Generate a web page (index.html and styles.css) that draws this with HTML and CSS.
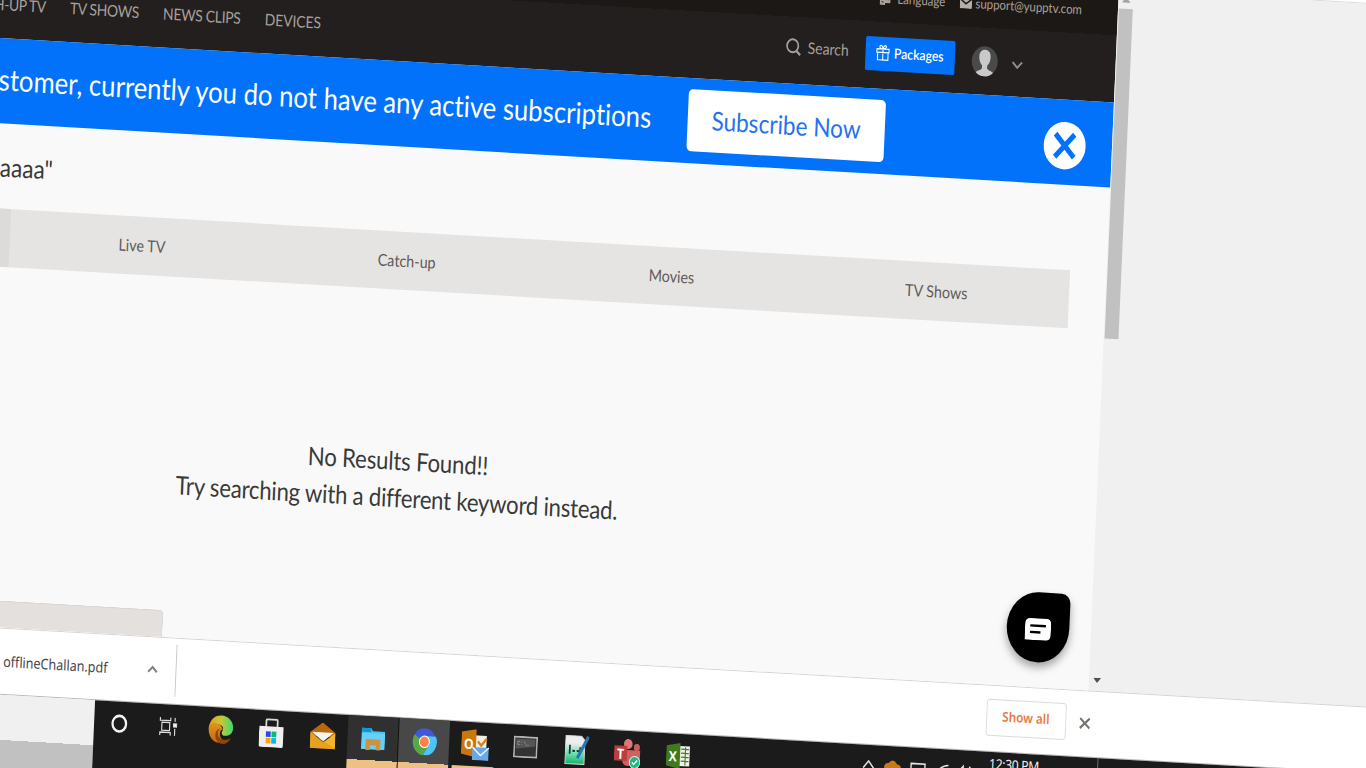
FILE: index.html
```html
<!DOCTYPE html>
<html lang="en">
<head>
<meta charset="utf-8">
<title>YuppTV search</title>
<link rel="stylesheet" href="styles.css">
</head>
<body>
<div class="stage">
  <div class="window-edge"></div>
  <div class="window">
    <main class="page">
      <header class="header">
      <div class="topbar">
        <svg class="lang-icon" width="14" height="14" viewBox="0 0 14 14"><path d="M1 1h8v3h4v8H7v2H1z" fill="#aaa19a"/><path d="M3 7h3M3 11h2M9 7h2v2" stroke="#1c1815" fill="none"/></svg>
        <span class="language">Language</span>
        <svg class="mail-icon" width="14" height="12" viewBox="0 0 14 12"><path d="M1 1h12v1L7 6 1 2zM0 3l7 5 7-5v8q0 1-1 1H1q-1 0-1-1z" fill="#b5ada7"/></svg>
        <span class="support">support@yupptv.com</span>
      </div>
      <nav class="nav">
        <span class="nav-item catch">CATCH-UP TV</span>
        <span class="nav-item shows">TV SHOWS</span>
        <span class="nav-item news">NEWS CLIPS</span>
        <span class="nav-item devices">DEVICES</span>
        <svg class="search-icon" width="18" height="18" viewBox="0 0 18 18" fill="none" stroke="#a8a09b" stroke-width="1.900"><circle cx="8" cy="8" r="6.500"/><path d="M12.500 13l4.500 4" stroke-width="2.400"/></svg>
        <span class="search">Search</span>
        <span class="packages"><svg width="16" height="17" viewBox="0 0 16 17" fill="none" stroke="#fff" stroke-width="1.200"><path d="M1 5h14v3.500H1zM2 8.500h12V16H2zM8 5v11M8 5C5 5 3.500 3.500 4.500 2S7.500 2 8 5c.5-3 2.500-4 3.500-3S11 5 8 5z"/></svg><b>Packages</b></span>
        <svg class="avatar" width="31" height="31" viewBox="0 0 31 31"><defs><clipPath id="av"><circle cx="15.500" cy="15.500" r="15"/></clipPath></defs><g clip-path="url(#av)"><path fill="#4a4a4a" d="M0 0h31v31H0z"/><path fill="#c9c9c9" d="M15.500 4c4 0 6.500 2.500 6.500 7 0 4-1.500 7-3.500 8.500v3c1 2 6 2.500 8 5V31h-22v-3.500c2-2.500 7-3 8-5v-3C10.500 18 9 15 9 11c0-4.500 2.500-7 6.500-7z"/></g></svg>
        <svg class="down" width="14" height="9" viewBox="0 0 14 9"><path d="M1.500 1.500L7 7l5.500-5.500" fill="none" stroke="#948c88" stroke-width="2"/></svg>
      </nav>
      </header>
      <section class="banner">
        <span class="message">Dear Customer, currently you do not have any active subscriptions</span>
        <span class="subscribe">Subscribe Now</span>
        <svg class="dismiss" width="49" height="48" viewBox="0 0 49 48"><ellipse cx="24.500" cy="24" rx="24.200" ry="23.700" fill="#fff"/><path d="M13.500 12.500l22 23M35.500 12.500l-22 23" stroke="#0272fb" stroke-width="5.500"/></svg>
      </section>
      <h1 class="query">Search results for "aaaaaaaa"</h1>
      <div class="tabs">
        <span class="tab active">All</span><span class="tab">Live TV</span><span class="tab">Catch-up</span><span class="tab">Movies</span><span class="tab">TV Shows</span>
      </div>
      <div class="empty"><p class="first">No Results Found!!</p><p class="second">Try searching with a different keyword instead.</p></div>
      <div class="status"></div>
      <div class="chat"><svg width="30" height="22" viewBox="0 0 30 22"><path d="M6 0h18q6 0 6 6v10q0 6-6 6H0V6q0-6 6-6z" fill="#fff"/><path d="M6 7.500h18M6 14h12" stroke="#000" stroke-width="2.400"/></svg></div>
    </main>
    <div class="scrollbar">
      <svg class="arrow up" width="10" height="6" viewBox="0 0 10 6"><path d="M0 6l5-6 5 6z" fill="#a3a3a3"/></svg>
      <div class="thumb"></div>
      <svg class="arrow" width="9" height="5" viewBox="0 0 9 5"><path d="M0 0h9L4.500 5z" fill="#505050"/></svg>
    </div>
  </div>
  <div class="shelf">
    <span class="file">offlineChallan.pdf</span>
    <svg class="file-menu" width="13" height="9" viewBox="0 0 13 9"><path d="M1.500 7.500l5-5 5 5" fill="none" stroke="#808080" stroke-width="2.200"/></svg>
    <span class="divider"></span>
    <span class="show-all">Show all</span>
    <svg class="shelf-close" width="13" height="12" viewBox="0 0 13 12"><path d="M1 1l11 10M12 1L1 11" stroke="#75756f" stroke-width="2.300"/></svg>
  </div>
  <div class="bottom">
    <div class="outside"></div>
    <div class="taskbar">
      <div class="app"><svg width="20" height="20" viewBox="0 0 20 20"><circle cx="10" cy="10" r="7.800" fill="none" stroke="#f2f2f2" stroke-width="2.600"/></svg></div>
      <div class="app task-view"><svg width="22" height="20" viewBox="0 0 22 20" fill="none" stroke="#ddd" stroke-width="1.300"><path d="M2 1v3h12V1M4 6h9v8H4zM2 19v-3h12v3M19 1v4M19 12v7"/><path d="M17.500 7h3.500v3h-3.500z" fill="#fff"/></svg></div>
      <div class="app"><svg width="30" height="30" viewBox="0 0 30 30"><defs><linearGradient id="e1"><stop stop-color="#dfa11b"/><stop offset=".5" stop-color="#c9c638"/><stop offset="1" stop-color="#39dc70"/></linearGradient><linearGradient id="e2" x2="0" y2="1"><stop stop-color="#df9420"/><stop offset="1" stop-color="#c66b08"/></linearGradient></defs><path d="M1 13C3 4 9 1 15 1c8 0 14 5 14 12 0 6-5 8-9 8-3 0-5-2-3-5 2-3-1-6-5-6-5 0-9 1-11 3z" fill="url(#e1)"/><path d="M1 13c2-5 8-5 12-3 2 1 4 3 4 5-4 0-5 9 3 11-9 6-20-1-19-13z" fill="url(#e2)"/><path d="M15 14c-6 3-3 11 4 11 4 0 6-1 8-2-3 5-7 7-12 6-8-3-8-14 0-15z" fill="#8f450c"/></svg></div>
      <div class="app"><svg width="29" height="29" viewBox="0 0 29 29"><path d="M8 9V2.500Q8 1 9.500 1h10Q21 1 21 2.500V9" fill="none" stroke="#d9d9d9" stroke-width="2"/><path d="M0 8h28v19q0 2-2 2H2q-2 0-2-2z" fill="#efefef"/><path d="M8 13h5.500v5.500H8z" fill="#264de4"/><path d="M14.500 13H20v5.500h-5.500z" fill="#08b984"/><path d="M8 19.500h5.500V25H8z" fill="#f9a709"/><path d="M14.500 19.500H20V25h-5.500z" fill="#06b8f5"/></svg></div>
      <div class="app"><svg width="29" height="27" viewBox="0 0 29 27"><path d="M0 10L14 0l15 10v4H0z" fill="#b9690b"/><path d="M2 10h25L15 19z" fill="#f4f4f4"/><path d="M0 10l15 10L29 10v16H0z" fill="#f2b42c"/><path d="M0 11v15h29L15 18z" fill="#dc9418" opacity=".6"/></svg></div>
      <div class="app running idle"><svg width="27" height="23" viewBox="0 0 27 23"><path d="M0 1h11l2 3h14v18H0z" fill="#43c7f7"/><path d="M0 1h11v4H0z" fill="#1595d5"/><path d="M0 6h27v16H0z" fill="#67d0f4"/><path d="M5 23V12h17v11h-5v-5h-7v5z" fill="#ce9140"/></svg></div>
      <div class="app running current"><svg width="29" height="27" viewBox="0 0 30 28"><circle cx="15" cy="14" r="14" fill="#4059dc"/><path d="M3 7a14 14 0 0 0 11 21l6-10-5-4z" fill="#57a844"/><path d="M15 8h13.500A14 14 0 0 1 14 28l7-12z" fill="#4cc4f8"/><circle cx="15" cy="14" r="6.500" fill="#fff"/><circle cx="15" cy="14" r="5.400" fill="#fa824b"/></svg></div>
      <div class="app running"><svg width="32" height="31" viewBox="0 0 32 31"><path d="M14 6h15v16H14z" fill="#f4eee8"/><path d="M19 12l4 4 6-7" stroke="#d48415" stroke-width="2.500" fill="none"/><path d="M0 3l17-3v28L0 25z" fill="#cc770b"/><text x="3" y="20" class="glyph" fill="#fff">O</text><path d="M13 18h19v13H13z" fill="#68aae9"/><path d="M13 18l9.500 8 9.500-8" fill="none" stroke="#fff" stroke-width="1.300"/></svg></div>
      <div class="app running"><svg width="28" height="22" viewBox="0 0 28 22"><path d="M1 1h26v20H1z" fill="#333" stroke="#b4b4b4" stroke-width="1.800"/><path d="M3 3h22v7L3 13z" fill="#555"/><text x="4" y="9" class="tiny" fill="#aaa">C:\_</text></svg></div>
      <div class="app"><svg width="28" height="30" viewBox="0 0 28 30"><defs><linearGradient id="n1" x2="0" y2="1"><stop offset=".25" stop-color="#eee"/><stop offset=".65" stop-color="#6adcae"/><stop offset="1" stop-color="#13b46b"/></linearGradient></defs><path d="M1 1h18l4 4v24H1z" fill="url(#n1)" stroke="#ddd"/><path d="M6 10v9M9 16h3M14 16h3M18 12v5" stroke="#123b30" stroke-width="2"/><path d="M27 1L15 23" stroke="#2777b5" stroke-width="3.500"/></svg></div>
      <div class="app"><svg width="31" height="29" viewBox="0 0 31 29"><circle cx="16" cy="5" r="5" fill="#dc7775"/><circle cx="26" cy="8" r="3.500" fill="#c7605c"/><path d="M10 11h20v8q-1 7-8 7-10 3-12-3z" fill="#cf6260"/><path d="M0 7h15v15H0z" fill="#ba3e3e"/><text x="3.500" y="20" class="glyph" fill="#fff">T</text><circle cx="24" cy="23" r="6" fill="#20b880" stroke="#d7f3e7"/><path d="M21 23l2 2 4-4" stroke="#fff" stroke-width="1.500" fill="none"/></svg></div>
      <div class="app"><svg width="28" height="26" viewBox="0 0 28 26"><path d="M14 3h13v20H14z" fill="#edf2e8"/><path d="M17 6h9M17 10h9M17 14h9M17 18h9M22 4v18" stroke="#4a7a2a" stroke-width="1.300"/><path d="M0 3l16-3v26L0 23z" fill="#41791f"/><text x="3" y="18.500" class="glyph" fill="#fff">X</text></svg></div>
      <div class="tray">
        <svg width="130" height="22" viewBox="0 0 130 22" fill="none" stroke="#e5e5e5" stroke-width="1.600"><path d="M2 12l6-7 6 7"/><path d="M27 15q-3-9 4-9 5-6 10 1 6 0 4 8z" fill="#c77a17" stroke="none"/><path d="M57 5h16v11H57zM60 19h8"/><path d="M87 16q1-10 13-11M92 16q1-5 8-6"/><path d="M110 9h3l4-4v14l-4-4h-3zM120 8q3 4 0 8M124 5q6 7 0 14"/></svg>
      </div>
      <div class="clock"><span>12:30 PM</span></div>
      <div class="desktop-edge"></div>
    </div>
  </div>
</div>
</body>
</html>
```
FILE: styles.css
```css
* { box-sizing: border-box; }
html { overflow: hidden; }
body { margin: 0; width: 1366px; height: 768px; overflow: hidden; background: #fff; font-family: Lato, "Liberation Sans", sans-serif; font-variant-ligatures: none; }
svg { display: block; flex: none; }
span { white-space: nowrap; flex: none; }
/* The desktop is tilted and narrowed as a single surface. */
.stage { width: 1960px; height: 870px; display: flex; flex-direction: column; transform-origin: 0 0; transform: matrix(0.868, 0.0501, -0.0435, 1, -277.3, -101.2); }
.window-edge { height: 10px; background: #fff; border-bottom: 1px solid #ddd9d9; flex: none; }
.window { height: 701px; display: flex; background: #f0f0f0; flex: none; }
.page { width: 1608.5px; background: #f9f9f9; position: relative; display: flex; flex-direction: column; overflow: hidden; flex: none; }
.header { height: 113px; flex: none; background: linear-gradient(#1c1815 46px, #231f1e 46px); }
.topbar { height: 46px; display: flex; align-items: center; color: #aaa19a; font-size: 13.2px; padding: 0 0 3px 1334px; }
.support { letter-spacing: -0.05px; }
.language { width: 72px; margin-left: 7px; }
.mail-icon { margin-right: 4px; }
.nav { height: 67px; color: #a8a09b; display: flex; align-items: center; font-size: 16px; padding-left: 280px; }
.nav-item { letter-spacing: -0.4px; margin-top: -3px; }
.catch { width: 124.6px; letter-spacing: -0.5px; text-indent: -1px; }
.shows { width: 107.2px; }
.news { width: 117.2px; letter-spacing: -0.3px; }
.devices { width: 600.5px; letter-spacing: -0.1px; }
.search-icon { margin-top: -7px; }
.search { width: 66.8px; margin: -9px 0 0 7px; }
.packages { width: 102.5px; height: 34.5px; background: #0272fb; border-radius: 2px; color: #fff; display: flex; align-items: center; gap: 4.5px; padding: 0 0 4px 12px; font-size: 14px; margin-top: -3px; flex: none; }
.packages b { font-weight: 600; }
.avatar { margin-left: 19px; }
.down { margin: 4px 0 0 15px; }
.banner { height: 85px; background: #0272fb; color: #fff; display: flex; align-items: center; flex: none; }
.message { width: 1078px; display: flex; justify-content: flex-end; font-size: 29.6px; padding-bottom: 5px; }
.subscribe { width: 227px; height: 62px; margin: -2px 0 0 41.8px; background: #fff; border-radius: 5px; color: #2472f0; font-size: 26px; display: flex; align-items: center; justify-content: center; padding-bottom: 2px; }
.dismiss { margin: 6px 0 0 183px; }
.query { margin: 0; height: 85px; width: 393px; text-align: right; font-size: 26px; font-weight: 400; color: #3a3a3a; line-height: 86px; white-space: nowrap; flex: none; }
.tabs { height: 58px; width: 1525px; margin-left: 41.7px; display: flex; flex: none; background: #e5e4e2; color: #5f5b59; font-size: 16.5px; }
.tab { flex: 1; display: flex; align-items: center; justify-content: center; }
.active { background: #dcdbd9; }
.empty { margin-top: 152px; text-align: center; color: #3a3a3a; font-size: 25.5px; line-height: 37px; letter-spacing: -0.18px; flex: none; }
.empty p { margin: 0; }
.second { letter-spacing: -0.24px; }
.status { position: absolute; left: 0; bottom: 0; width: 541.500px; height: 27px; background: #e4e0dd; border: 1px solid #d5d3d2; border-bottom: 0; border-radius: 0 5px 0 0; }
.chat { position: absolute; left: 1512px; top: 606px; width: 72px; height: 70px; background: #000; border-radius: 50% 10px 50% 50%; box-shadow: 0 5px 9px rgba(0, 0, 0, .35); display: flex; align-items: center; justify-content: center; padding-top: 3px; }
.scrollbar { width: 19px; display: flex; flex-direction: column; align-items: center; padding-bottom: 8px; flex: none; }
.up { margin-top: 7px; }
.thumb { width: 16px; height: 330px; margin: 6px 0 auto; background: #c1c1c1; flex: none; }
.shelf { height: 67px; background: #fff; border-top: 1px solid #d9d3d3; border-bottom: 1px solid #b9b9b9; display: flex; align-items: center; padding: 0 0 2px 360.500px; font-family: "Noto Sans", sans-serif; flex: none; }
.file { width: 165px; font-size: 14.500px; letter-spacing: -0.05px; color: #45474c; }
.divider { width: 1px; height: 52px; margin-left: 20.500px; background: #c5c5c5; }
.show-all { width: 92px; height: 37px; margin-left: 932.500px; border: 1px solid #dedada; border-radius: 4px; color: #e9793f; font-size: 13.500px; font-weight: 600; display: flex; align-items: center; justify-content: center; padding-bottom: 3px; }
.shelf-close { margin-left: 15px; }
.bottom { flex: 1; display: flex; }
.outside { width: 467.900px; background: linear-gradient(#f0f0f0 45px, #c1c1c1 45px); flex: none; }
.taskbar { flex: 1; display: flex; background: #1b1b1b; }
.app { width: 58.500px; height: 60px; display: flex; justify-content: center; align-items: center; padding-bottom: 16px; flex: none; }
.task-view { padding-right: 6px; }
.running { background: linear-gradient(#efc083, #efc083) 4px 44px / 48px 16px no-repeat; }
.idle { background: linear-gradient(#303030 44px, #efc083 44px); border-right: 1px solid #111; }
.current { background: linear-gradient(#484848 44px, #efc083 44px); }
.glyph { font: bold 14px "Open Sans", sans-serif; }
.tiny { font: 6px "Liberation Mono", monospace; }
.tray { width: 328.600px; padding: 11px 0 0 182px; }
.clock { width: 125px; padding-top: 1px; font: 14px/21px "Noto Sans", sans-serif; letter-spacing: -0.4px; color: #f0f0f0; }
.desktop-edge { width: 1px; background: #777; }
```
